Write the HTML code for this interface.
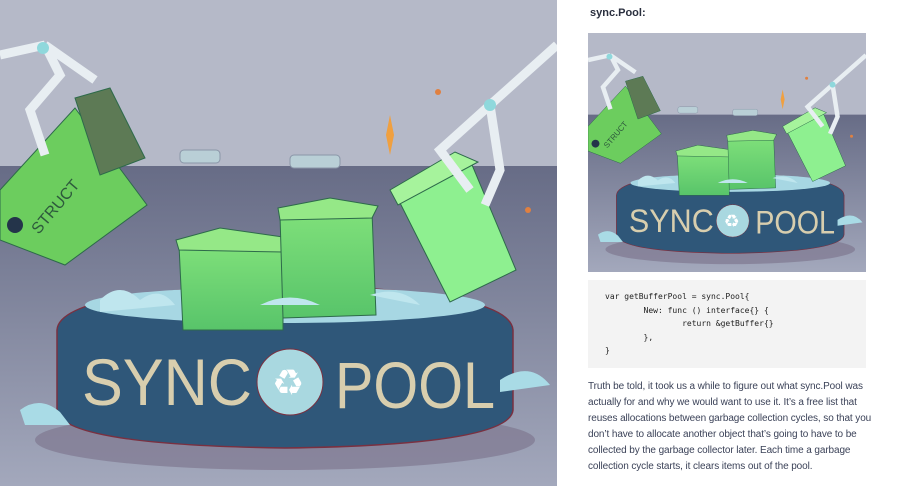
<!DOCTYPE html>
<html><head><style>
body{margin:0;width:900px;height:486px;overflow:hidden;background:#fff;font-family:"Liberation Sans",sans-serif;position:relative}
.ill{position:absolute;left:0;top:0;width:557px;height:486px}
.th{position:absolute;left:588px;top:33px;width:278px;height:239px}
.title{position:absolute;left:590px;top:7px;font-size:11px;color:#2a2f3e;font-weight:bold}
.code{position:absolute;left:588px;top:280px;width:278px;height:88px;background:#f3f3f3}
.code pre{margin:0;position:absolute;left:17px;top:10px;font-family:"DejaVu Sans Mono","Liberation Mono",monospace;font-size:8px;line-height:13.5px;color:#222}
.p{position:absolute;left:588px;top:379px;width:310px;white-space:nowrap;font-size:10px;line-height:16.1px;color:#3b4258;letter-spacing:-0.1px}
</style></head><body>
<svg width="0" height="0" style="position:absolute">
<defs>
<symbol id="art" viewBox="0 0 557 486">
<linearGradient id="fl" x1="0" y1="0" x2="0" y2="1"><stop offset="0" stop-color="#676c86"/><stop offset="1" stop-color="#a3a8bc"/></linearGradient>
<linearGradient id="gb" x1="0" y1="0" x2="0" y2="1"><stop offset="0" stop-color="#7fe07a"/><stop offset="1" stop-color="#58c46a"/></linearGradient>
<rect width="557" height="486" fill="#b5b9c8"/>
<rect y="166" width="557" height="320" fill="url(#fl)"/>
<ellipse cx="285" cy="440" rx="250" ry="30" fill="#7f7890" opacity=".7"/>
<path d="M57 330 Q60 290 285 285 Q510 290 513 330 L513 410 Q510 445 285 448 Q60 445 57 410Z" fill="#2f5779" stroke="#7a3040" stroke-width="1.5"/>
<ellipse cx="285" cy="305" rx="200" ry="18" fill="#a7d7e3"/>
<path d="M179 245 L283 248 L283 330 L183 330Z" fill="url(#gb)" stroke="#2d6a4a"/>
<path d="M176 240 L220 228 L290 238 L283 252 L179 250Z" fill="#95e887" stroke="#2d6a4a"/>
<path d="M280 215 L372 212 L376 315 L283 318Z" fill="url(#gb)" stroke="#2d6a4a"/>
<path d="M278 208 L330 198 L378 206 L372 218 L280 220Z" fill="#95e887" stroke="#2d6a4a"/>
<path d="M396 195 L470 160 L516 270 L450 302Z" fill="#8ef090" stroke="#2d6a4a"/>
<path d="M390 190 L455 152 L478 162 L398 205Z" fill="#a6f39c" stroke="#2d6a4a"/>
<path d="M0 190 L75 108 L147 205 L65 265 L0 240Z" fill="#6ccd5e" stroke="#2d6a4a"/>
<path d="M75 98 L110 88 L145 158 L100 175Z" fill="#5d7a55" stroke="#2d6a4a"/>
<circle cx="15" cy="225" r="8" fill="#24344a"/>
<text x="20" y="225" transform="rotate(-50 40 210)" font-size="16" fill="#2d5a3c" font-family="Liberation Sans">STRUCT</text>
<path d="M0 55 L45 45 M45 45 L60 75 L30 110 L45 155 M45 45 L95 80" stroke="#e8eef2" stroke-width="9" fill="none"/>
<circle cx="43" cy="48" r="6" fill="#8fd8dc"/>
<path d="M557 45 L490 105 L440 150 L470 190 M490 105 L500 170 L485 205" stroke="#e8eef2" stroke-width="9" fill="none"/>
<circle cx="490" cy="105" r="6" fill="#8fd8dc"/>
<path d="M100 300 Q120 280 140 300 Q160 285 175 305 L100 312Z M260 305 Q290 290 320 305 Z M370 295 Q400 285 420 305Z" fill="#bfe6ee"/>
<path d="M20 410 Q40 395 60 412 L70 425 L25 425Z M500 380 Q530 360 550 385 L500 392Z" fill="#a9dbe6"/>
<text x="82" y="405" font-size="66" fill="#d8ceae" font-family="Liberation Sans" textLength="170" lengthAdjust="spacingAndGlyphs">SYNC</text>
<text x="335" y="408" font-size="66" fill="#d8ceae" font-family="Liberation Sans" textLength="160" lengthAdjust="spacingAndGlyphs">POOL</text>
<circle cx="290" cy="382" r="33" fill="#a9d8e0" stroke="#7a3040"/>
<text x="272" y="395" font-size="36" fill="#fff">♻</text>
<path d="M390 115 L394 135 L390 155 L386 135Z" fill="#f0a040"/>
<circle cx="438" cy="92" r="3" fill="#e08040"/>
<circle cx="528" cy="210" r="3" fill="#e08040"/>
<rect x="180" y="150" width="40" height="13" rx="4" fill="#b9cfd6" stroke="#8a96a8"/>
<rect x="290" y="155" width="50" height="13" rx="4" fill="#b9cfd6" stroke="#8a96a8"/>
</symbol>
</defs>
</svg>
<svg class="ill" viewBox="0 0 557 486" preserveAspectRatio="none"><use href="#art"/></svg>
<div class="title">sync.Pool:</div>
<svg class="th" viewBox="0 0 557 486" preserveAspectRatio="none"><use href="#art"/></svg>
<div class="code"><pre>var getBufferPool = sync.Pool{
        New: func () interface{} {
                return &amp;getBuffer{}
        },
}</pre></div>
<div class="p">Truth be told, it took us a while to figure out what sync.Pool was<br>actually for and why we would want to use it. It’s a free list that<br>reuses allocations between garbage collection cycles, so that you<br>don’t have to allocate another object that’s going to have to be<br>collected by the garbage collector later. Each time a garbage<br>collection cycle starts, it clears items out of the pool.</div>
</body></html>
